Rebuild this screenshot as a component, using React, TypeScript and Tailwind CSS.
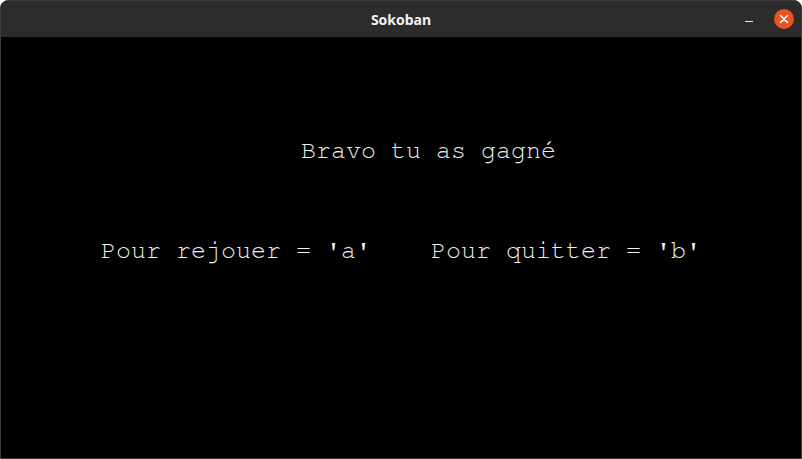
import React from "react";

export default function App() {
  return (
    <div className="w-[802px] h-[459px] bg-black overflow-hidden rounded-t-[8px] border border-[#3c3c3c] flex flex-col">
      <div className="relative h-[36px] shrink-0 bg-[#2c2c2c] flex items-center justify-center">
        <span className="text-[14px] font-bold text-[#f2f2f2]" style={{ fontFamily: '"Noto Sans", "DejaVu Sans", sans-serif' }}>
          Sokoban
        </span>
        <div className="absolute right-[7px] top-[8px] flex items-center gap-[21px]">
          <div className="w-[8px] h-[1px] bg-[#e8e8e8] mt-[4px]" />
          <div className="w-[20px] h-[20px] rounded-full bg-[#e95420] flex items-center justify-center">
            <svg width="10" height="10" viewBox="0 0 10 10">
              <path d="M1.5 1.5 L8.5 8.5 M8.5 1.5 L1.5 8.5" stroke="#ffffff" strokeWidth="1.6" strokeLinecap="round" />
            </svg>
          </div>
        </div>
      </div>
      <div
        className="flex-1 bg-black text-[#f0f0f0] text-[25px] leading-[30px] whitespace-pre"
        style={{ fontFamily: '"Nimbus Mono PS", "Nimbus Mono L", "FreeMono", "Courier New", "Liberation Mono", monospace' }}
      >
        <div className="pl-[300px] mt-[99px]">Bravo tu as gagné</div>
        <div className="pl-[100px] mt-[70px]">{"Pour rejouer = 'a'    Pour quitter = 'b'"}</div>
      </div>
    </div>
  );
}
